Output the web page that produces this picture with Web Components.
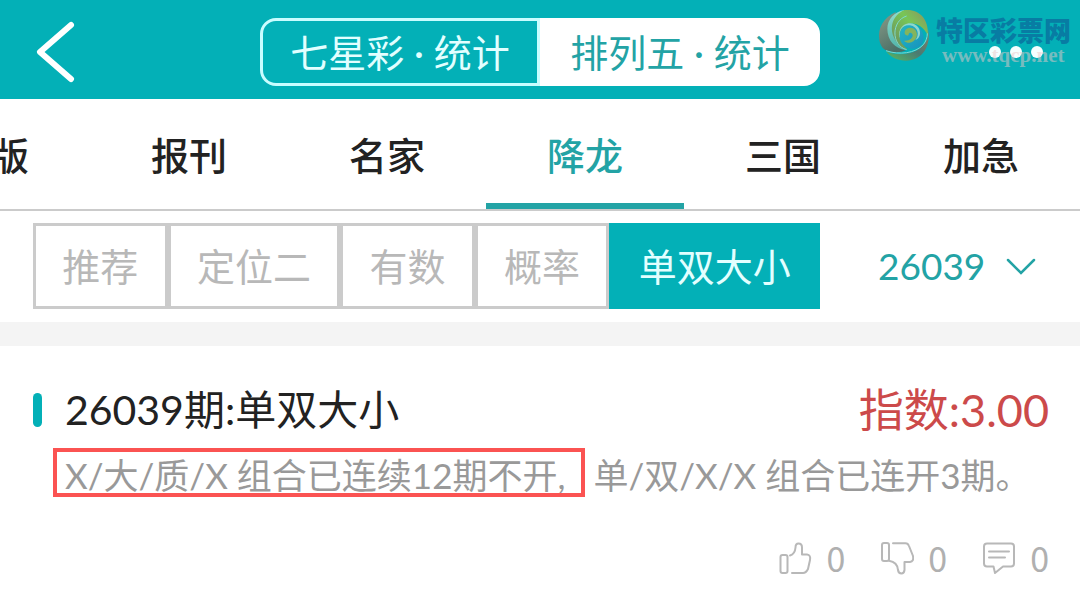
<!DOCTYPE html>
<html lang="zh-CN">
<head>
<meta charset="utf-8">
<meta name="viewport" content="width=device-width, initial-scale=1">
<title>降龙 · 单双大小</title>
<style>
  html { --teal: #03b0b7; --teal-text: #23a3a5; --line: #cbcbcb; }
  body { margin: 0; background: #fff; color: #222; font-family: Lato, "Noto Sans CJK SC", sans-serif; }
</style>
</head>
<body>
<lottery-page></lottery-page>

<script>
const define = (name, html, setup) => customElements.define(name, class extends HTMLElement {
  constructor() {
    super();
    const t = document.createElement('template');
    t.innerHTML = html;
    this.attachShadow({ mode: 'open' }).append(t.content.cloneNode(true));
  }
  connectedCallback() { if (setup) setup(this, this.shadowRoot); }
});

define('site-mark', `
<style>
  :host { display: flex; align-items: flex-start; pointer-events: none; }
  svg { width: 60px; height: 60px; display: block; }
  .words { display: grid; padding-top: 10px; }
  .name { font: 900 27px/28px "Noto Sans CJK SC", sans-serif; color: #087ca3; }
  .site { font: 700 21px/22px "Liberation Serif", serif; color: rgba(235, 200, 200, .5); padding-left: 6px; }
</style>
<svg viewBox="0 0 180 180" aria-hidden="true">
  <defs>
    <linearGradient id="rim" x1="0" y1="0" x2="0.5" y2="1"><stop offset="0" stop-color="#8a9c88"/><stop offset="1" stop-color="#4b7067"/></linearGradient>
    <linearGradient id="mint" x1="0" y1="0" x2="0" y2="1"><stop offset="0" stop-color="#92dccb"/><stop offset="1" stop-color="#4fb3a9"/></linearGradient>
    <linearGradient id="leaf" x1="0" y1="1" x2="1" y2="0"><stop offset="0" stop-color="#6a8a60"/><stop offset="0.6" stop-color="#78c656"/><stop offset="1" stop-color="#8f8f62"/></linearGradient>
    <linearGradient id="sea" x1="0" y1="0" x2="1" y2="1"><stop offset="0" stop-color="#25b6c4"/><stop offset="1" stop-color="#1792bd"/></linearGradient>
    <linearGradient id="tail" x1="0" y1="1" x2="1" y2="0"><stop offset="0" stop-color="#55bb62"/><stop offset="0.5" stop-color="#4b7a72"/><stop offset="1" stop-color="#927d63"/></linearGradient>
  </defs>
  <path fill="url(#rim)" d="M60 18C22 34 4 68 10 102c3 18 12 30 28 34 18 4 40 4 52-4C52 122 28 78 60 18z"/>
  <path fill="url(#mint)" d="M86 12C56 16 34 40 34 68c0 34 22 60 56 64C60 112 42 56 86 12z"/>
  <path fill="url(#leaf)" d="M86 12C46 28 40 70 56 98c8 18 20 30 38 32-22-18-30-46-12-66 20-22 56-12 74 24C158 38 130 8 86 12z"/>
  <path fill="url(#sea)" d="M76 70c-14 26 0 54 32 58 26 0 38-20 34-42-8-30-44-42-66-16z"/>
  <path fill="#8fd6cb" d="M72 96c-6-26 12-42 30-38 24 4 30 30 16 44 14-4 18-22 10-36-12-22-48-18-56 6-4 10-4 18 0 24z"/>
  <path fill="#84b45c" d="M86 80c0-16 22-20 32-8 12 16 0 36-18 38-8 0-12-2-16-6 14 2 26-6 26-16 0-8-10-10-12-4 0 4-2 6-6 4-4-2-6-4-6-8z"/>
  <path fill="url(#tail)" d="M30 136c34 16 88 10 112-18 12-12 16-28 14-48 10 44-12 94-66 94-24 0-48-10-60-28z"/>
  <path fill="none" stroke="#7fd8cf" stroke-width="3" d="M30 134c40 14 88 8 112-18 8-10 12-22 12-34M92 131C44 118 46 44 92 30"/>
</svg>
<div class="words"><span class="name">特区彩票网</span><span class="site">www.tqcp.net</span></div>`);

define('app-bar', `
<style>
  :host { display: grid; grid-template-columns: 260fr 560fr 260fr; align-items: center; box-sizing: border-box;
    position: relative; min-height: 99px; padding-top: 5px; background: var(--teal); }
  button { font: inherit; color: inherit; border: 0; background: none; padding: 0; margin: 0; cursor: pointer; }
  .back { justify-self: start; padding-left: 34px; }
  .back svg { display: block; width: 44px; height: 64px; }
  .seg { display: grid; grid-template-columns: 1fr 1fr; font-size: 38px; line-height: 62px; white-space: pre; }
  .seg button { border: 3px solid #c9fdff; color: #e2ffff; border-radius: 16px 0 0 16px; }
  .seg button + button { background: #fff; border-color: #fff; color: var(--teal-text); border-radius: 0 16px 16px 0; }
  .more { justify-self: end; padding-right: 36px; display: flex; }
  .more svg { display: block; width: 56px; height: 14px; }
  site-mark { position: absolute; top: 6px; right: 9px; }
</style>
<button class="back" aria-label="返回"><svg viewBox="0 0 44 64" fill="none" stroke="#fff" stroke-width="6" stroke-linecap="round" stroke-linejoin="round"><path d="M37 5 6 32 37 59"/></svg></button>
<div class="seg"><button>七星彩 · 统计</button><button aria-pressed="true">排列五 · 统计</button></div>
<button class="more" aria-label="更多"><svg viewBox="0 0 56 14" fill="#f4ffff"><circle cx="7" cy="7" r="6"/><circle cx="28" cy="7" r="6"/><circle cx="49" cy="7" r="6"/></svg></button>
<site-mark></site-mark>`);

define('tab-item', `
<style>
  :host { display: block; flex: 0 0 calc(100% * 11 / 60); }
  a { display: block; box-sizing: border-box; height: 110px; padding-top: 27px; text-align: center; text-decoration: none;
    font: 500 38px/56px "Noto Sans CJK SC", sans-serif; color: #222; border-bottom: 6px solid transparent; }
  :host([selected]) a { color: var(--teal-text); border-color: var(--teal-text); }
  :host([cut]) a { padding-left: 38px; }
</style>
<a href="#"><slot></slot></a>`);

define('tab-strip', `
<style>:host { display: flex; justify-content: flex-end; overflow: hidden; border-bottom: 2px solid var(--line); }</style>
<slot></slot>`);

define('chip-button', `
<style>
  :host { display: block; flex: 1 0 auto; }
  button { width: 100%; font: inherit; font-size: 38px; line-height: 80px; padding: 0 26px; margin: 0; background: #fff;
    border: 3px solid var(--line); color: #b8b8b8; cursor: pointer; display: block; }
  :host([selected]) button { background: var(--teal); border-color: var(--teal); color: #e2ffff; }
</style>
<button><slot></slot></button>`);

define('issue-select', `
<style>
  :host { display: grid; align-items: center; color: var(--teal-text); }
  select { grid-area: 1 / 1; appearance: none; border: 0; background: none; font: inherit; font-size: 37px; line-height: 48px;
    color: inherit; padding: 0 50px 0 0; margin: 0; }
  svg { grid-area: 1 / 1; justify-self: end; width: 30px; height: 18px; pointer-events: none; }
</style>
<select aria-label="期号"><option>26039</option></select>
<svg viewBox="0 0 30 18" fill="none" stroke="currentColor" stroke-width="2.5" stroke-linecap="round"><path d="M2 3l13 13L28 3"/></svg>`);

define('filter-bar', `
<style>
  :host { display: flex; align-items: center; justify-content: space-between; padding: 12px 44px 13px 33px; border-bottom: 24px solid #f4f4f4; }
  .chips { display: flex; flex: 0 0 auto; min-width: 787px; }
</style>
<div class="chips"><slot></slot></div><issue-select></issue-select>`);

const icons = {
  up: '<rect x="1.5" y="13" width="7" height="18" rx="2"/><path d="M11 13.5Q16 12 16.5 5.500Q16.500 1.500 19.500 1.500Q23 1.500 23 5.500V12.500H28Q32 13 31 18L29 27Q27 31 24 31H13"/>',
  down: '<rect x="1" y="1" width="7" height="18" rx="2"/><path d="M12 1.200H24.500Q27 1.200 28 4L32 14Q33 19.500 29 20H23.500V28Q23 31.500 20.500 31.500Q17.500 31.500 17 28Q16.500 20 8 18.700"/>',
  talk: '<path d="M4 1.500H28Q31 1.500 31 4.500V21.500Q31 24.500 28 24.500H20L12 31L10.500 24.500H4Q1 24.500 1 21.500V4.500Q1 1.500 4 1.500ZM6 9.500H26M6 15.500H22"/>'
};
define('count-button', `
<style>
  :host { display: block; }
  button { display: flex; align-items: center; gap: 14px; border: 0; padding: 0; margin: 0; background: none; cursor: pointer;
    font: 34px/40px "Noto Sans CJK SC", sans-serif; color: #b0b0b0; }
  svg { width: 33px; height: 33px; fill: none; stroke: #b8b8b8; stroke-width: 2; stroke-linecap: round; stroke-linejoin: round; }
</style>
<button><svg viewBox="0 0 33 33"></svg><slot></slot></button>`, (el, root) => {
  root.querySelector('svg').innerHTML = icons[el.getAttribute('icon')];
  root.querySelector('button').setAttribute('aria-label', el.getAttribute('label'));
});

define('forecast-card', `
<style>
  :host { display: block; padding: 34px 31px 20px 33px; }
  header { display: flex; align-items: center; gap: 23px; line-height: 60px; }
  header::before { content: ""; width: 9px; height: 34px; border-radius: 5px; background: var(--teal); }
  h2 { margin: 0; flex: 1; font-size: 41px; font-weight: 400; color: #222; }
  .index { font-size: 45px; color: #cc4a4a; }
  p { margin: 10px 0 0 32px; font-size: 35px; line-height: 50px; color: #999; white-space: nowrap; }
  footer { display: flex; justify-content: flex-end; gap: 36px; margin-top: 38px; }
</style>
<header><h2><slot name="title"></slot></h2><span class="index"><slot name="index"></slot></span></header>
<p><slot></slot></p>
<footer><slot name="actions"></slot></footer>`);

define('red-box', `
<style>
  :host { position: relative; display: inline-block; padding-right: 28px; }
  :host::after { content: ""; position: absolute; inset: -2px 8px 3px -12px; border: 4px solid #fb5352; }
</style>
<slot></slot>`);

define('lottery-page', `
<style>:host { display: block; }</style>
<app-bar></app-bar>
<tab-strip>
  <tab-item cut>版</tab-item><tab-item>报刊</tab-item><tab-item>名家</tab-item><tab-item selected>降龙</tab-item><tab-item>三国</tab-item><tab-item>加急</tab-item>
</tab-strip>
<filter-bar>
  <chip-button>推荐</chip-button><chip-button>定位二</chip-button><chip-button>有数</chip-button><chip-button>概率</chip-button><chip-button selected>单双大小</chip-button>
</filter-bar>
<forecast-card>
  <span slot="title">26039期:单双大小</span>
  <span slot="index">指数:3.00</span>
  <red-box>X/大/质/X 组合已连续12期不开,</red-box>单/双/X/X 组合已连开3期。
  <count-button slot="actions" icon="up" label="赞">0</count-button>
  <count-button slot="actions" icon="down" label="踩">0</count-button>
  <count-button slot="actions" icon="talk" label="评论">0</count-button>
</forecast-card>`);
</script>
</body>
</html>
